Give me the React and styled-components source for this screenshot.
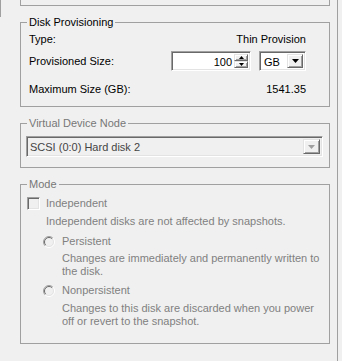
import React from 'react'
import styled, { createGlobalStyle, css } from 'styled-components'

const GlobalStyle = createGlobalStyle`
html, body {
  margin: 0;
  padding: 0;
  background: #f0f0f0;
}
`

const sunken = css`
  box-sizing: border-box;
  border: 1px solid;
  border-color: #a0a0a0 #fff #fff #a0a0a0;
  box-shadow: inset 1px 1px 0 #696969, inset -1px -1px 0 #e3e3e3;
`

const raised = css`
  box-sizing: border-box;
  border: 1px solid;
  border-color: #e3e3e3 #696969 #696969 #e3e3e3;
  box-shadow: inset 1px 1px 0 #fff, inset -1px -1px 0 #a0a0a0;
  background: #f0f0f0;
`

function DownArrow({ color = '#000' }) {
  return (
    <svg width="7" height="4" viewBox="0 0 7 4">
      <path d="M0 0h7L3.5 4z" fill={color} />
    </svg>
  )
}

function SpinArrow({ up }) {
  return (
    <svg width="5" height="3" viewBox="0 0 5 3">
      <path d={up ? 'M0 3h5L2.5 0z' : 'M0 0h5L2.5 3z'} fill="#000" />
    </svg>
  )
}

function Radio() {
  return (
    <svg width="12" height="12" viewBox="0 0 12 12">
      <circle cx="6" cy="6" r="5" fill="#f0f0f0" />
      <path d="M2.1 9.9A5.5 5.5 0 0 1 9.9 2.1" stroke="#a0a0a0" fill="none" />
      <path d="M2.8 9.2A4.5 4.5 0 0 1 9.2 2.8" stroke="#696969" fill="none" />
      <path d="M9.9 2.1A5.5 5.5 0 0 1 2.1 9.9" stroke="#fff" fill="none" />
      <path d="M9.2 2.8A4.5 4.5 0 0 1 2.8 9.2" stroke="#e3e3e3" fill="none" />
    </svg>
  )
}

function App() {
  return (
    <>
      <GlobalStyle />
      <Frame>
        <LeftEdge />
        <Content>
          <TopBox />

          <Group>
            <Legend>Disk Provisioning</Legend>
            <DiskBody>
              <Row $h={13}>
                <span>Type:</span>
                <span>Thin Provision</span>
              </Row>
              <Row $h={20} $mt={5}>
                <span>Provisioned Size:</span>
                <Controls>
                  <SpinBox>
                    <SpinValue>100</SpinValue>
                    <Spinner>
                      <SpinButton><SpinArrow up /></SpinButton>
                      <SpinButton><SpinArrow /></SpinButton>
                    </Spinner>
                  </SpinBox>
                  <UnitSelect>
                    <SelectText>GB</SelectText>
                    <DropButton $w={16}><DownArrow /></DropButton>
                  </UnitSelect>
                </Controls>
              </Row>
              <Row $h={13} $mt={12}>
                <span>Maximum Size (GB):</span>
                <span>1541.35</span>
              </Row>
            </DiskBody>
          </Group>

          <Group>
            <Legend $disabled>Virtual Device Node</Legend>
            <NodeBody>
              <NodeSelect>
                <SelectText $disabled>SCSI (0:0) Hard disk 2</SelectText>
                <DropButton $w={17}><DownArrow color="#a0a0a0" /></DropButton>
              </NodeSelect>
            </NodeBody>
          </Group>

          <Group>
            <Legend $disabled>Mode</Legend>
            <ModeBody>
              <Option>
                <Checkbox />
                <span>Independent</span>
              </Option>
              <Desc $mt={5} $ml={19}>Independent disks are not affected by snapshots.</Desc>
              <Option $mt={7} $ml={16} $gap={7}>
                <Radio />
                <span>Persistent</span>
              </Option>
              <Desc $mt={4} $ml={35}>
                Changes are immediately and permanently written to<br />the disk.
              </Desc>
              <Option $mt={6} $ml={16} $gap={7}>
                <Radio />
                <span>Nonpersistent</span>
              </Option>
              <Desc $mt={5} $ml={35}>
                Changes to this disk are discarded when you power<br />off or revert to the snapshot.
              </Desc>
            </ModeBody>
          </Group>
        </Content>
      </Frame>
    </>
  )
}

const Frame = styled.div`
display: flex;
align-items: flex-start;
width: 338px;
height: 361px;
box-sizing: border-box;
border-right: 1px solid #a0a0a0;
font: 11px/13px "Liberation Sans", Arial, sans-serif;
color: #000;
`;
const LeftEdge = styled.div`
width: 1px;
height: 17px;
flex-shrink: 0;
background: #a0a0a0;
`;
const Content = styled.div`
display: flex;
flex-direction: column;
width: 310px;
margin-left: 19px;
`;
const TopBox = styled.div`
height: 6px;
box-sizing: border-box;
border: 1px solid #a0a0a0;
border-top: none;
`;
const Group = styled.fieldset`
margin: 10px 0 0;
padding: 0;
min-width: 0;
border: 1px solid #a0a0a0;
`;
const Legend = styled.legend`
margin-left: 6px;
padding: 0 2px;
line-height: 13px;
color: ${p => (p.$disabled ? '#777' : '#000')};
`;
const DiskBody = styled.div`
display: flex;
flex-direction: column;
padding: 4px 23px 10px 8px;
`;
const Row = styled.div`
display: flex;
align-items: center;
justify-content: space-between;
height: ${p => p.$h}px;
margin-top: ${p => p.$mt || 0}px;
white-space: nowrap;
`;
const Controls = styled.div`
display: flex;
gap: 8px;
`;
const SpinBox = styled.div`
${sunken};
display: flex;
width: 80px;
height: 20px;
padding: 2px 2px 2px 2px;
background: #fff;
`;
const SpinValue = styled.div`
flex: 1;
text-align: right;
padding-right: 2px;
line-height: 16px;
`;
const Spinner = styled.div`
display: flex;
flex-direction: column;
width: 14px;
`;
const SpinButton = styled.div`
${raised};
flex: 1;
display: flex;
align-items: center;
justify-content: center;
`;
const UnitSelect = styled.div`
${sunken};
display: flex;
width: 47px;
height: 20px;
padding: 2px;
background: #fff;
`;
const SelectText = styled.div`
flex: 1;
padding-left: ${p => (p.$disabled ? 1 : 2)}px;
line-height: 16px;
color: ${p => (p.$disabled ? '#444' : '#000')};
white-space: nowrap;
`;
const DropButton = styled.div`
${raised};
width: ${p => p.$w}px;
display: flex;
align-items: center;
justify-content: center;
`;
const NodeBody = styled.div`
padding: 6px 6px 10px 5px;
`;
const NodeSelect = styled.div`
${sunken};
display: flex;
height: 21px;
padding: 2px;
background: #f0f0f0;
`;
const ModeBody = styled.div`
display: flex;
flex-direction: column;
align-items: flex-start;
padding: 6px 6px 15px 6px;
color: #808080;
`;
const Option = styled.div`
display: flex;
align-items: center;
gap: ${p => p.$gap || 6}px;
height: 13px;
margin: ${p => p.$mt || 0}px 0 0 ${p => p.$ml || 0}px;
`;
const Checkbox = styled.div`
${sunken};
width: 13px;
height: 13px;
background: #f0f0f0;
`;
const Desc = styled.div`
margin: ${p => p.$mt}px 0 0 ${p => p.$ml}px;
white-space: nowrap;
`;

export default App
